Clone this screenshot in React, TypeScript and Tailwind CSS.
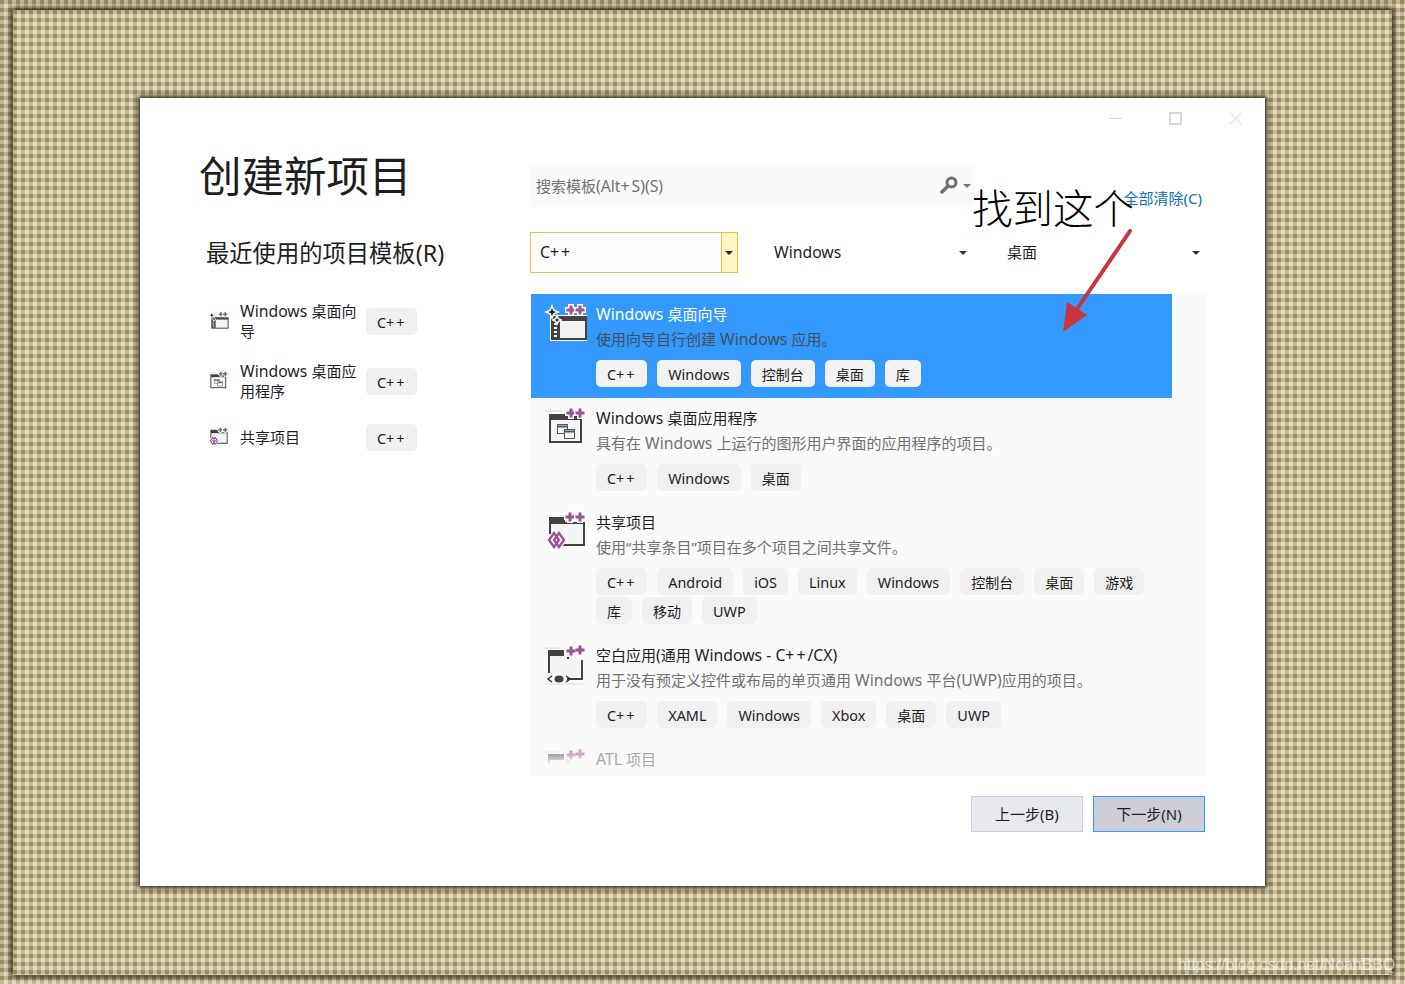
const gingham = "bg-[conic-gradient(#c4b996_25%,#e4dec9_0_50%,#c4b996_0_75%,#9c8a60_0)] bg-[length:8px_8px]";

type Template = {
	title: string;
	desc: string;
	tags: string[];
	icon: 'wizard' | 'desktop' | 'shared' | 'uwp';
	selected?: boolean;
}

const templates: Template[] = [
	{
		title: 'Windows 桌面向导',
		desc: '使用向导自行创建 Windows 应用。',
		tags: ['C++', 'Windows', '控制台', '桌面', '库'],
		icon: 'wizard',
		selected: true,
	},
	{
		title: 'Windows 桌面应用程序',
		desc: '具有在 Windows 上运行的图形用户界面的应用程序的项目。',
		tags: ['C++', 'Windows', '桌面'],
		icon: 'desktop',
	},
	{
		title: '共享项目',
		desc: '使用“共享条目”项目在多个项目之间共享文件。',
		tags: ['C++', 'Android', 'iOS', 'Linux', 'Windows', '控制台', '桌面', '游戏', '库', '移动', 'UWP'],
		icon: 'shared',
	},
	{
		title: '空白应用(通用 Windows - C++/CX)',
		desc: '用于没有预定义控件或布局的单页通用 Windows 平台(UWP)应用的项目。',
		tags: ['C++', 'XAML', 'Windows', 'Xbox', '桌面', 'UWP'],
		icon: 'uwp',
	},
];

const recent: { lines: string; icon: Template['icon'] }[] = [
	{ lines: 'Windows 桌面向导', icon: 'wizard' },
	{ lines: 'Windows 桌面应用程序', icon: 'desktop' },
	{ lines: '共享项目', icon: 'shared' },
];

// latin runs sit wider than the cjk font gives them, plus signs most of all
function Mixed({ text, tight }: { text: string; tight?: boolean }) {
	return (
		<>
			{text.split(/([\x20-\x7e]+)/).map((run, i) => {
				if (i % 2 === 0) return run;
				return (
					<span key={i} className={tight ? 'inline-block translate-y-px text-[1.03em]' : 'text-[1.05em]'}>
						{run.split(/(\+)/).map((part, j) => (
							part === '+' ? <span key={j} className={tight ? 'tracking-[1.8px]' : 'tracking-[2px]'}>+</span> : part
						))}
					</span>
				);
			})}
		</>
	);
}

function Plus({ x, y, halo }: { x: number; y: number; halo?: boolean }) {
	const d = `M${x - 4.5} ${y - 1.5}h3v-3h3v3h3v3h-3v3h-3v-3h-3z`;
	return (
		<>
			{halo && <path d={d} fill="#fff" stroke="#fff" strokeWidth="3" />}
			<path d={d} fill="#9b4f96" />
		</>
	);
}

function ProjectIcon({ name, className }: { name: Template['icon']; className: string }) {
	return (
		<svg className={className} viewBox="0 0 50 50">
			{name === 'wizard' && (
				<>
					<path d="M8 16h37v26H8z" fill="#fff" />
					<rect x="9" y="17" width="36" height="24" fill="#424242" />
					<rect x="18" y="22" width="25" height="17" fill="#f3f3f3" />
					<path d="M12 24h3v2h-3zM12 28h3v2h-3zM12 32h3v2h-3zM12 36h3v2h-3z" fill="#f3f3f3" />
					<path d="M10 7l1.800 4.200 4.200 1.800-4.200 1.800-1.800 4.200-1.800-4.200-4.200-1.800 4.200-1.800z" fill="#222" stroke="#fff" strokeWidth="1.500" />
					<path d="M15 17l1.300 2.700 2.700 1.300-2.700 1.300-1.300 2.700-1.300-2.700-2.700-1.300 2.700-1.300z" fill="#222" stroke="#fff" strokeWidth="1.500" />
					<Plus x={29} y={11} halo />
					<Plus x={38} y={11} halo />
				</>
			)}
			{name === 'desktop' && (
				<>
					<path d="M3 8h17" stroke="#ccc" strokeWidth="1" />
					<rect x="7" y="11" width="33" height="29" fill="#424242" />
					<rect x="9" y="17" width="29" height="21" fill="#f5f5f5" />
					<rect x="15.500" y="21.500" width="10" height="9" fill="#f5f5f5" stroke="#555" />
					<rect x="22.500" y="26.500" width="10" height="9" fill="#f5f5f5" stroke="#555" />
					<path d="M16 23.500h9M23 28.500h9" stroke="#555" strokeWidth="2" />
					<Plus x={29} y={10} halo />
					<Plus x={38} y={10} halo />
				</>
			)}
			{name === 'shared' && (
				<>
					<path d="M7 10h16v5h20v24H7z" fill="#f5f5f5" />
					<path d="M7 10h16v7H7z" fill="#424242" />
					<path d="M23 15h20v24H20v-2h21V17H23z" fill="#424242" />
					<path d="M7 17h2v10H7z" fill="#424242" />
					<path d="M12 23l5 4 5-4 4 10-9 10-4 0-8-10z" fill="#fafafa" />
					<path d="M12 26L7 33l5 7 5-7zM17 26l-5 7 5 7 5-7z" fill="none" stroke="#9b4f96" strokeWidth="2.300" />
					<Plus x={28} y={10} halo />
					<Plus x={38} y={10} halo />
				</>
			)}
			{name === 'uwp' && (
				<>
					<path d="M2 8h16M2 44h39" stroke="#ddd" strokeWidth="1" />
					<path d="M6 10h16v9h17v18H6z" fill="#f5f5f5" />
					<path d="M6 10h16v6H6zM6 16h2v17H6zM39 20h2v20H25v-2h14z" fill="#424242" />
					<rect x="25" y="17" width="2" height="2" fill="#424242" />
					<path d="M10 36l-4 3 4 3M24 36l4 3-4 3" fill="none" stroke="#333" strokeWidth="1.500" />
					<ellipse cx="17" cy="39" rx="4.500" ry="3.500" fill="#424242" />
					<Plus x={29} y={11} />
					<Plus x={38} y={10} />
				</>
			)}
		</svg>
	);
}

function Tag({ label, light }: { label: string; light?: boolean }) {
	return (
		<span className={`flex h-[27px] items-center rounded-[5px] px-[11px] pt-px text-[14px] text-[#1e1e1e] ${light ? 'bg-[#f2f2f2]' : 'bg-[#f0f0f0]'}`}>
			<span><Mixed text={label} tight /></span>
		</span>
	);
}

function Caret({ className }: { className: string }) {
	return <span className={`block h-0 w-0 border-x-[4px] border-t-[4px] border-x-transparent ${className}`}></span>;
}

function TemplateRow({ item }: { item: Template }) {
	return (
		<div className={`flex pl-[11px] pt-[9px] pb-[10px] ${item.selected ? 'bg-[#3399ff]' : ''}`}>
			<ProjectIcon name={item.icon} className="mt-[-4px] mr-[4px] h-[50px] w-[50px] shrink-0" />
			<div className="flex-1">
				<div className={`h-[22px] text-[15px] leading-[22px] ${item.selected ? 'text-white' : 'text-[#1e1e1e]'}`}><Mixed text={item.title} /></div>
				<div className={`mt-[2px] h-[24px] text-[15px] leading-[24px] ${item.selected ? 'text-[#44505c]' : 'text-[#717171]'}`}><Mixed text={item.desc} /></div>
				<div className="mt-[9px] flex flex-wrap gap-x-[10px] gap-y-[2px] pb-px">
					{item.tags.map((tag) => <Tag key={tag} label={tag} light={item.selected} />)}
				</div>
			</div>
		</div>
	);
}

export default function App() {
	return (
		<div className={`relative h-[984px] w-[1405px] overflow-hidden pl-[13px] pr-[13px] pt-[10px] pb-[9px] font-['Noto_Sans','Noto_Sans_CJK_SC',sans-serif] ${gingham}`}>
			<div className={`h-full w-full pl-[127px] pt-[88px] shadow-[0_0_6px_2px_#2b2515] ${gingham}`}>
				<div className="relative flex h-[788px] w-[1125px] flex-col bg-white shadow-[0_0_5px_2px_#2b2515]">
					<div className="flex h-[40px] shrink-0 items-center justify-end">
						<span className="flex w-[60px] justify-center"><span className="h-px w-[13px] bg-[#d4d6de]"></span></span>
						<span className="flex w-[60px] justify-center"><span className="h-[13px] w-[13px] border-2 border-[#d6d9e3]"></span></span>
						<span className="flex w-[60px] justify-center">
							<svg width="13" height="13" viewBox="0 0 13 13"><path d="M.5.5l12 12M12.500.5l-12 12" stroke="#d6d9e3" /></svg>
						</span>
					</div>
					<div className="flex flex-1">
						<div className="w-[390px] shrink-0 pl-[60px] pt-[12px]">
							<h1 className="ml-[-1px] h-[52px] text-[42.500px] leading-[52px] font-normal whitespace-nowrap text-[#1e1e1e]">创建新项目</h1>
							<h2 className="mt-[35px] ml-[6px] h-[32px] text-[23.300px] leading-[32px] whitespace-nowrap text-[#1e1e1e]">最近使用的项目模板(R)</h2>
							<div className="mt-[22px] ml-[7px]">
								{recent.map((item) => (
									<div key={item.lines} className="flex items-center py-[10px]">
										<ProjectIcon name={item.icon} className="mr-[9px] h-[24px] w-[24px] shrink-0" />
										<div className="min-h-[32px] w-[121px] shrink-0 content-center text-[15px] leading-[20px] text-[#1e1e1e]"><Mixed text={item.lines} /></div>
										<div className="ml-[5px]"><Tag label="C++" /></div>
									</div>
								))}
							</div>
						</div>
						<div className="w-[675px] shrink-0 pt-[27px]">
							<div className="flex h-[42px] justify-between pr-[3px]">
								<div className="flex h-[42px] w-[445px] items-center bg-[#fafafa] pl-[6px] pr-[4px] text-[15px] text-[#717171]">
									<span className="flex-1 pt-px"><Mixed text="搜索模板(Alt+S)(S)" /></span>
									<svg className="mr-[5px] mb-[2px]" width="18" height="18" viewBox="0 0 18 18">
										<circle cx="11.500" cy="6.500" r="4.500" fill="none" stroke="#6e6e6e" strokeWidth="3" />
										<path d="M8 10l-6 6" stroke="#6e6e6e" strokeWidth="3.500" strokeLinecap="round" />
									</svg>
									<Caret className="border-t-[#777]" />
								</div>
								<span className="self-end text-[15px] leading-[18px] text-[#0e70c0]">全部清除(C)</span>
							</div>
							<div className="mt-[25px] flex h-[41px] items-stretch">
								<div className="flex w-[208px] border border-[#e8bf52] bg-[#fcfcfc]">
									<span className="flex flex-1 items-center pl-[9px] text-[15px] text-[#1e1e1e]"><span><Mixed text="C++" /></span></span>
									<span className="flex w-[16px] items-center justify-center border-l border-[#e8bf52] bg-[#fdf4bf] pr-px"><Caret className="border-t-[#222]" /></span>
								</div>
								<div className="ml-[36px] flex w-[193px] items-center justify-between text-[15px] text-[#1e1e1e]"><span><Mixed text="Windows" /></span><Caret className="border-t-[#333]" /></div>
								<div className="ml-[40px] flex w-[193px] items-center justify-between text-[15px] text-[#1e1e1e]">桌面<Caret className="border-t-[#333]" /></div>
							</div>
							<div className="relative mt-[21px] ml-px h-[482px] w-[674px] overflow-hidden bg-[#fafafa] pr-[33px]">
								{templates.map((item) => <TemplateRow key={item.title} item={item} />)}
								<div className="flex pl-[11px] pt-[9px]">
									<ProjectIcon name="uwp" className="mt-[-4px] mr-[4px] h-[50px] w-[50px] shrink-0 opacity-50" />
									<div className="text-[15px] leading-[22px] text-[#a8a8a8]"><Mixed text="ATL 项目" /></div>
								</div>
								<div className="absolute bottom-[8px] left-0 h-[14px] w-[60px] bg-[linear-gradient(180deg,rgba(250,250,250,0),#fafafa_80%)]"></div>
								<div className="absolute inset-x-0 bottom-0 h-[8px] bg-[#fafafa]"></div>
							</div>
							<div className="mt-[20px] flex justify-end gap-[10px]">
								<button className="h-[36px] w-[112px] border border-[#ccced9] bg-[#e8e9ef] text-[15px] text-[#1e1e1e]">上一步(B)</button>
								<button className="h-[36px] w-[112px] border border-[#3399ff] bg-[#ccced9] text-[15px] text-[#1e1e1e]">下一步(N)</button>
							</div>
						</div>
					</div>
				</div>
			</div>

			<div className="absolute left-[972px] top-[182px] text-[40.500px] leading-[54px] font-light whitespace-nowrap text-black">找到这个</div>
			<svg className="absolute left-[1055px] top-[222px]" width="85" height="115" viewBox="0 0 85 115">
				<path d="M75 9L20 90" stroke="#c9353a" strokeWidth="4" strokeLinecap="round" />
				<path d="M8 110L12 80L32 93z" fill="#c9353a" />
			</svg>
			<div className="absolute right-[10px] top-[955px] font-['Liberation_Sans',sans-serif] text-[15.800px] leading-[20px] text-white/60">https://blog.csdn.net/NoahBBQ</div>
		</div>
	);
}
